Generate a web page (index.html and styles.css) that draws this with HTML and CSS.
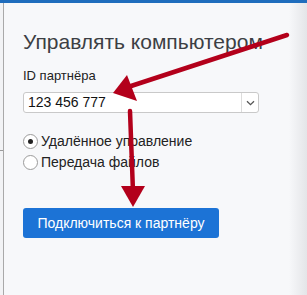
FILE: index.html
```html
<!DOCTYPE html>
<html lang="ru">
<head>
    <meta charset="UTF-8">
    <title>Управлять компьютером</title>
    <link rel="stylesheet" href="styles.css">
</head>
<body>
    <div class="topbar"></div>
    <div class="window">
        <div class="gutter"><span class="tick"></span></div>
        <div class="panel">
            <h1 class="title">Управлять компьютером</h1>
            <label class="field-label">ID партнёра</label>
            <div class="select">
                <span class="select-value">123 456 777</span>
                <span class="select-btn">
                    <svg width="9" height="6" viewBox="0 0 9 6"><path d="M1 1.2 L4.5 4.6 L8 1.2" fill="none" stroke="#555" stroke-width="1.3"/></svg>
                </span>
            </div>
            <div class="radios">
                <label class="radio"><span class="dot checked"></span>Удалённое управление</label>
                <label class="radio"><span class="dot"></span>Передача файлов</label>
            </div>
            <button class="connect">Подключиться к партнёру</button>
        </div>
        <div class="shade"></div>
    </div>

    <!-- стрелки поверх скриншота -->
    <svg class="arrows" width="307" height="295" viewBox="0 0 307 295">
        <line x1="287" y1="35" x2="128" y2="87" stroke="#b3001b" stroke-width="4.5" stroke-linecap="round"/>
        <polygon points="113,93 127,75 137,101" fill="#b3001b"/>
        <line x1="130" y1="111" x2="133" y2="192" stroke="#b3001b" stroke-width="4.5" stroke-linecap="round"/>
        <polygon points="121,186 145,186 133,207" fill="#b3001b"/>
    </svg>
</body>
</html>
```

FILE: styles.css
```css
body {
    margin: 0;
    width: 307px;
    height: 295px;
    overflow: hidden;
    font-family: 'Liberation Sans', Arial, sans-serif;
    background: #f7f8fa;
    color: #222;
    position: relative;
}
.topbar {
    height: 3px;
    background: #1f6dbd;
}
.window {
    display: flex;
    height: 292px;
}
.gutter {
    width: 3px;
    background: #f2f3f5;
    position: relative;
}
.tick {
    position: absolute;
    top: 147px;
    left: 0;
    width: 3px;
    height: 1px;
    background: #9a9a9a;
}
.panel {
    flex: 1;
    border-left: 1px solid #a9a9a9;
    padding: 0 0 0 19px;
    background: #f7f8fa;
}
.shade {
    width: 18px;
    background: linear-gradient(to right, #f7f8fa, #e4e5e8);
}
.title {
    margin: 25px 0 0;
    font-size: 21px;
    font-weight: normal;
    line-height: 27px;
    color: #3c3f44;
}
.field-label {
    display: block;
    margin-top: 13px;
    font-size: 13px;
    line-height: 16px;
    color: #222;
}
.select {
    display: flex;
    margin-top: 8px;
    width: 234px;
    height: 19px;
    background: #fff;
    border: 1px solid #c9c9c9;
    border-radius: 3px;
}
.select-value {
    flex: 1;
    padding-left: 4px;
    font-size: 14px;
    line-height: 19px;
    color: #111;
}
.select-btn {
    width: 16px;
    border-left: 1px solid #dcdcdc;
    display: flex;
    align-items: center;
    justify-content: center;
}
.radios {
    margin-top: 20px;
    display: flex;
    flex-direction: column;
    gap: 4px;
}
.radio {
    display: flex;
    align-items: center;
    gap: 3px;
    font-size: 14px;
    line-height: 17px;
    color: #222;
}
.dot {
    width: 15px;
    height: 15px;
    border: 1px solid #9b9b9b;
    border-radius: 50%;
    background: #fff;
    box-sizing: border-box;
    display: flex;
    align-items: center;
    justify-content: center;
}
.dot.checked::after {
    content: "";
    width: 5px;
    height: 5px;
    border-radius: 50%;
    background: #222;
}
.connect {
    display: block;
    margin-top: 37px;
    width: 196px;
    height: 30px;
    border: none;
    border-radius: 3px;
    background: #1c73d6;
    color: #fff;
    font-family: 'Liberation Sans', Arial, sans-serif;
    font-size: 14px;
    padding: 0;
}
.arrows {
    position: absolute;
    left: 0;
    top: 0;
}
```
